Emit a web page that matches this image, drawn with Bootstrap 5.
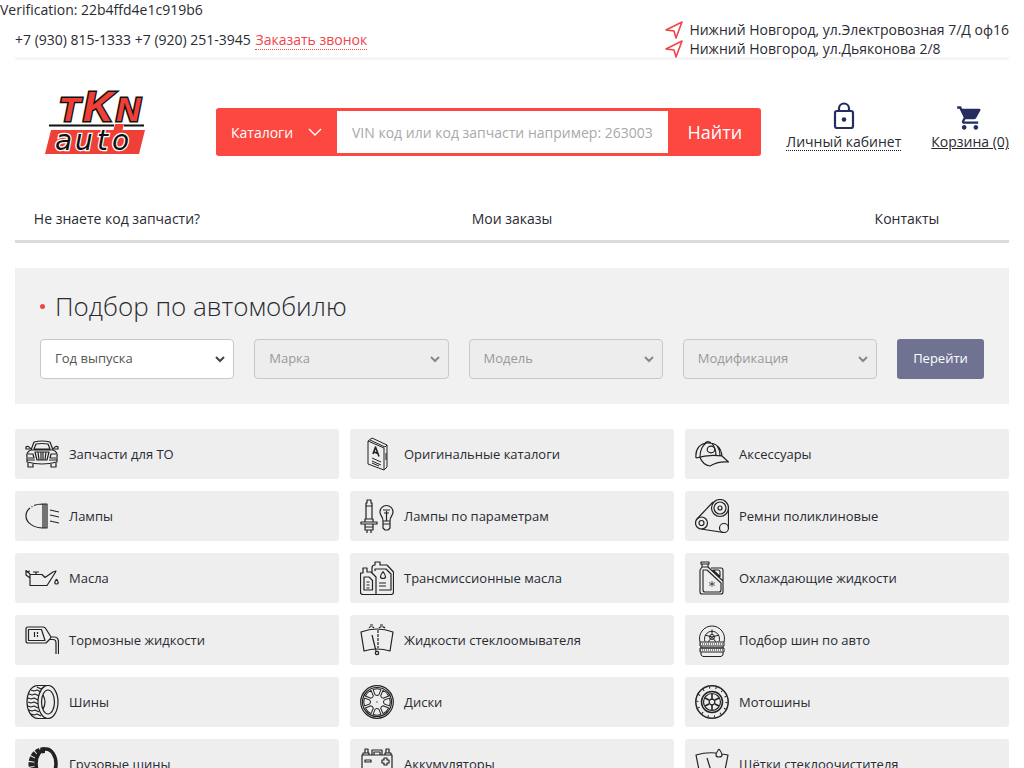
<!DOCTYPE html>
<html lang="ru">
<head>
<meta charset="utf-8">
<meta name="viewport" content="width=device-width, initial-scale=1">
<title>TKN auto</title>
<link href="https://cdn.jsdelivr.net/npm/bootstrap@5.3.0/dist/css/bootstrap.min.css" rel="stylesheet">
<style>
body{font-family:"Open Sans",sans-serif;font-size:14px;line-height:19px;color:#2a2a32}
a{color:inherit;text-decoration:none}
.page{padding:0 15px}
.topbar{border-bottom:3px solid #f5f5f5;height:41px;padding-top:2px}
.callback{color:#f0444a;border-bottom:1px dotted #f0444a;margin-left:1px}
.place{padding-left:6px}
.masthead{padding-top:20px;gap:25px}
.brand{padding-left:29px;width:176px}
.search{border-radius:3px;background:#fd4841;height:48px}
.search button{background:none;border:0;color:#fff}
.catalogs{width:121px;font-weight:500;padding:0 15px}
.search input{border:0;border-radius:0;margin:3px 0;padding:0 15px;font-size:14px;color:#333;min-width:0}
.search input::placeholder{color:#a9a9a9;opacity:1}
.find{width:93px;font-size:18px;font-weight:500}
.userlink{margin-bottom:5px}
.basket{margin-left:5px}
.account{border-bottom:1px dotted #1b1b24;line-height:16px;margin-top:4px}
.cart{text-decoration:underline}
.mainnav{border-bottom:3px solid #dcdcdc;margin-top:43px;padding:10px 0 12px}
.mainnav a{width:204px;text-align:center}
.picker{background:#f1f1f1;margin-top:25px;padding:18px 25px 25px}
.picker h1{font-size:26px;line-height:40px;font-weight:300;margin-bottom:13px}
.picker form{gap:20px}
.dot{width:5px;height:5px;border-radius:50%;background:#f0444a;margin-right:10px}
.picker .form-select{height:40px;font-size:13px;color:#555;border-color:#c8c8c8;border-radius:4px;padding:0 30px 0 14px;background-position:right 7px center;background-size:12px 12px;background-image:url("data:image/svg+xml,%3Csvg xmlns='http://www.w3.org/2000/svg' viewBox='0 0 12 12'%3E%3Cpath d='M2 4l4 4 4-4' fill='none' stroke='%23444' stroke-width='2'/%3E%3C/svg%3E")}
.picker .form-select:disabled{background-color:#ededed;color:#999;opacity:1;background-image:url("data:image/svg+xml,%3Csvg xmlns='http://www.w3.org/2000/svg' viewBox='0 0 12 12'%3E%3Cpath d='M2 4l4 4 4-4' fill='none' stroke='%23888' stroke-width='2'/%3E%3C/svg%3E")}
.go{background:#6f7291;color:#fff;border-radius:3px;font-size:13px;width:87px;height:40px;padding:0}
.go:hover{background:#5c5f7e;color:#fff}
.tiles{margin-top:25px;gap:12px 11px;grid-template-columns:repeat(3,1fr)}
.tile{background:#eee;border-radius:3px;height:50px;padding:0 10px;gap:10px;font-size:13px}
.tile svg{width:34px;height:34px;flex:none;fill:none;stroke:#222;stroke-width:1.2;stroke-linejoin:round}
</style>
</head>
<body>
<div>Verification: 22b4ffd4e1c919b6</div>
<div class="page">
<div class="topbar d-flex justify-content-between align-items-center">
  <div>+7 (930) 815-1333 +7 (920) 251-3945 <a href="#" class="callback">Заказать звонок</a></div>
  <address class="m-0">
    <div class="d-flex align-items-center"><svg width="18" height="18" fill="none" stroke="#f0444a" stroke-width="1.6" stroke-linejoin="round"><path d="M1 9 17 1 11 17 9 10Z"/></svg><span class="place">Нижний Новгород, ул.Электровозная 7/Д оф16</span></div>
    <div class="d-flex align-items-center"><svg width="18" height="18" fill="none" stroke="#f0444a" stroke-width="1.6" stroke-linejoin="round"><path d="M1 9 17 1 11 17 9 10Z"/></svg><span class="place">Нижний Новгород, ул.Дьяконова 2/8</span></div>
  </address>
</div>
<header class="masthead d-flex align-items-end">
  <a href="#" class="brand flex-shrink-0" aria-label="TKN auto">
    <svg class="d-block" width="104" height="76" viewBox="0 -8 104 76">
      <path d="M7 42H101L95 66H1Z" fill="#ee4037"/>
      <path d="M71 36H80L77 48H68Z" fill="#ee4037"/>
      <path d="M5 37.500H70M80 37.500H100" stroke="#111" stroke-width="1.8"/>
      <g font-family="Liberation Sans" font-weight="700" font-style="italic" fill="#ee4037" stroke="#111" stroke-width="3" paint-order="stroke">
      <text x="15" y="33" font-size="34">T</text><text x="39" y="33" font-size="42">K</text><text x="72" y="33" font-size="34">N</text></g>
      <g font-family="DejaVu Sans" font-style="italic" font-size="28" fill="#111" stroke="#fff" stroke-width="2.500" paint-order="stroke">
      <text x="11" y="62">a</text><text x="31" y="62">u</text><text x="53" y="62">t</text><text x="68" y="62">o</text></g>
    </svg>
  </a>
  <form class="search d-flex flex-grow-1" onsubmit="return false">
    <button type="button" class="catalogs d-flex align-items-center justify-content-between flex-shrink-0">Каталоги<svg width="14" height="8" fill="none" stroke="#fff" stroke-width="1.4"><path d="M1 1 7 7 13 1"/></svg></button>
    <input class="flex-grow-1" type="text" aria-label="Поиск" placeholder="VIN код или код запчасти например: 263003">
    <button class="find flex-shrink-0">Найти</button>
  </form>
  <a href="#" class="userlink d-flex flex-column align-items-center"><svg width="22" height="28" fill="none" stroke="#242c60" stroke-width="2.2"><rect x="2" y="9" width="18" height="17" rx="2"/><path d="M6 9V6.500a5 5 0 0 1 10 0V9"/><circle cx="11" cy="17.500" r="2.300" fill="#242c60" stroke="none"/></svg><span class="account">Личный кабинет</span></a>
  <a href="#" class="userlink basket d-flex flex-column align-items-center"><svg width="28" height="28" viewBox="0 0 24 24" fill="#242c60"><path d="M7 18c-1.100 0-1.990.9-1.990 2S5.900 22 7 22s2-.9 2-2-.9-2-2-2zM1 2v2h2l3.600 7.590-1.350 2.450C4.520 15.370 5.480 17 7 17h12v-2H7.420c-.14 0-.25-.11-.25-.25l.03-.12.9-1.630h7.450c.75 0 1.410-.41 1.750-1.030l3.580-6.490A1 1 0 0 0 20 4H5.210l-.94-2H1zm16 16c-1.100 0-1.990.9-1.990 2s.89 2 1.990 2 2-.9 2-2-.9-2-2-2z"/></svg><span class="cart">Корзина (0)</span></a>
</header>
<nav class="mainnav d-flex justify-content-between"><a href="#">Не знаете код запчасти?</a><a href="#">Мои заказы</a><a href="#">Контакты</a></nav>
<section class="picker">
  <h1 class="d-flex align-items-center"><span class="dot"></span>Подбор по автомобилю</h1>
  <form class="d-flex" onsubmit="return false">
    <select class="form-select" aria-label="Год выпуска"><option>Год выпуска</option></select>
    <select class="form-select" aria-label="Марка" disabled><option>Марка</option></select>
    <select class="form-select" aria-label="Модель" disabled><option>Модель</option></select>
    <select class="form-select" aria-label="Модификация" disabled><option>Модификация</option></select>
    <button class="btn go flex-shrink-0">Перейти</button>
  </form>
</section>
<main class="tiles d-grid">
<a href="#" class="tile d-flex align-items-center"><svg viewBox="0 0 34 34"><path d="M6 13 9 5Q17 3 25 5L28 13M9 12l2-5q6-1 12 0l2 5ZM6 13Q1 15 2 20V25Q17 29 32 25V20Q33 15 28 13ZM5 12H1V10q2-2 5 2M29 12h4v-2q-2-2-5 2M3 26v4h5v-3M31 26v4h-5v-3M10 15H24L22 23H12ZM13 15l1 8M16 15v8M18 15v8M21 15l-1 8M3 17h5l1 4H3M31 17h-5l-1 4h6M2 23h8M24 23h8"/></svg>Запчасти для ТО</a>
<a href="#" class="tile d-flex align-items-center"><svg viewBox="0 0 34 34"><path stroke-width="1" d="M8 4 12 1 27 8V30L24 33 8 27ZM8 4 24 11V33M10 3l15 7 2-2M12 21l9 4M12 24l9 4M12 26l7 3M26 16v7"/><path stroke-width="1.600" d="m13 17 2.500-7 3.500 9.500M14 15l4 1.500"/></svg>Оригинальные каталоги</a>
<a href="#" class="tile d-flex align-items-center"><svg viewBox="0 0 34 34"><path d="M1 21C0 12 5 6 13 6C21 6 26 10 27 19M1 21Q14 17 27 19L33.500 25Q23 24 15 29 8 28 5 20.500M10 6q3-3 6 0M11 6C7 9 5 14 5 20M17 6.500q4 5 4 12M22 9q3 4 3 10"/><ellipse cx="16" cy="12.500" rx="3.800" ry="3.300"/></svg>Аксессуары</a>
<a href="#" class="tile d-flex align-items-center"><svg viewBox="0 0 34 34"><path d="M5 9Q1 12 1 17C1 24 9 29 18 29H22V5H18Q12 5 9 6.500M6.500 8l1-.5M18 5V29M20 5V29M25 11l9 2M25 16l9 2M25 22l9 2"/></svg>Лампы</a>
<a href="#" class="tile d-flex align-items-center"><svg viewBox="0 0 34 34"><path d="M6 20V4H7V1H11V4H12V20ZM6 7h6M5 20h8v3H5ZM1 23H17V25H1ZM5 25H13V31H5ZM5 28H13M7 31v3M11 31v3M23 22C23 17 20 17 20 13a6.500 6.500 0 0 1 13 0C33 17 30 17 30 22V29l-2 2H25l-2-2ZM23 22h7M23 25h7M26.500 22V12M23 11h7M24 14h5"/></svg>Лампы по параметрам</a>
<a href="#" class="tile d-flex align-items-center"><svg viewBox="0 0 34 34"><circle cx="25" cy="9" r="8.500"/><circle cx="25" cy="9" r="6"/><circle cx="25" cy="9" r="2"/><circle cx="6.500" cy="24" r="6"/><circle cx="6.500" cy="24" r="2.500"/><circle cx="29" cy="29" r="4.500"/><path d="M2 20 18 3M33.500 9V29M6 30 29 33.500"/></svg>Ремни поликлиновые</a>
<a href="#" class="tile d-flex align-items-center"><svg viewBox="0 0 34 34"><path stroke-width="1.200" d="M5 13.500H17L20 16.500 28 11 31 10 30 12 22 24.500H5ZM5 17 1 14V9.500l4 3.500M11 13v-2M8 11h6M31.500 18q-3.500 5 0 5t0-5M1 11l4-1"/></svg>Масла</a>
<a href="#" class="tile d-flex align-items-center"><svg viewBox="0 0 34 34"><path d="M12 12V7Q12 4 15 4V1H20V4H27L33.500 11V31Q33.500 33.500 31 33.500H3Q.5 33.500 .5 31V12H3V7H7V11H11L16 16V33M4 29V16H9L12.500 19.500V29ZM15 10V8H26L31 13V29H19M6.500 21h3M6.500 24h3M6.500 27h3M19 22h7M19 25h7"/><path d="M23 10.500q-5 7 0 7t0-7"/></svg>Трансмиссионные масла</a>
<a href="#" class="tile d-flex align-items-center"><svg viewBox="0 0 34 34"><path stroke-width="1.100" d="M6 1h8v2H6ZM7 3h6v3H7ZM7 6 5 9V31q0 2 2 2H26q2 0 2-2V9q0-2-2-2H16M13 6 28 20M8 9h4L26 22v7q0 2-2 2H10q-2 0-2-2ZM18 9h5q2 0 2 2v4.500Z"/><path stroke-width=".7" d="M17 20v6M14 21.500l6 3M20 21.500l-6 3"/></svg>Охлаждающие жидкости</a>
<a href="#" class="tile d-flex align-items-center"><svg viewBox="0 0 34 34"><path d="M3 4H18Q20 4 21 6L26 14L25 16L21 20H3Q1 20 1 18V6Q1 4 3 4ZM3.500 6.500H16.500L20 17.500H3.500ZM26 14H29Q33.500 14 33.500 19V31M31 31V20Q31 16.500 28 16.500H25M9.500 9v5M12.500 9v2M12.500 12v2"/></svg>Тормозные жидкости</a>
<a href="#" class="tile d-flex align-items-center"><svg viewBox="0 0 34 34"><path d="M1 9Q17 3 33 9L30 28Q17 24 4 28ZM12 12l4 16"/><circle cx="17" cy="30" r="1.700"/><path stroke-dasharray="3 1" d="M18 7V25M10 2h4M20 2h4M9 5q2-3 5 0M19 5q3-3 6 0"/></svg>Жидкости стеклоомывателя</a>
<a href="#" class="tile d-flex align-items-center"><svg viewBox="0 0 34 34"><g stroke-width="1"><path d="M5 19A12.500 12.500 0 1 1 29 19M10 18.500a7.500 7.500 0 1 1 14 0M5 19H29V23H5ZM6 23V25H28V23M5 25H29V29H5ZM6 29V32L8 33.500H26L28 32V29M17 6.500v5M17 14l-7-2M17 14l7-2M17 14l-4 5M17 14l4 5"/><path d="M5 21h24M5 27h24" stroke-dasharray="1 1"/><circle cx="17" cy="14" r="2.500"/></g></svg>Подбор шин по авто</a>
<a href="#" class="tile d-flex align-items-center"><svg viewBox="0 0 34 34"><ellipse cx="23" cy="17" rx="10" ry="16.500"/><ellipse cx="23" cy="17" rx="6.500" ry="12"/><path d="M23 .5H13C5 1 2 9 2 17s4 16 11 16.500H23M18 10q4 7 0 14M6 5l3 1 3-1 4 2M4 9l3 1 3-1 4 2M3 13l3 1 3-1 4 2M3 17l3 1 3-1 4 2M3 21l3 1 3-1 4 2M4 25l3 1 3-1 4 2M6 29l3 1 3-1 4 2M12 2l4 2 3-2"/></svg>Шины</a>
<a href="#" class="tile d-flex align-items-center"><svg viewBox="0 0 34 34"><circle cx="17" cy="17" r="16.300"/><circle cx="17" cy="17" r="14.500"/><g id="spokes" stroke-width="1"><path id="window" d="M13 4.500Q17 3 21 4.500L18.800 10Q17 11 15.200 10Z"/><use href="#window" transform="rotate(45 17 17)"/><use href="#window" transform="rotate(90 17 17)"/><use href="#window" transform="rotate(135 17 17)"/></g><use href="#spokes" transform="rotate(180 17 17)"/><circle cx="17" cy="17" r=".5" stroke-width=".5"/></svg>Диски</a>
<a href="#" class="tile d-flex align-items-center"><svg viewBox="0 0 34 34"><circle cx="17" cy="17" r="16.200" stroke-width="1.500"/><circle cx="17" cy="17" r="14.500" stroke-dasharray="1 5.500" stroke-width="2"/><circle cx="17" cy="17" r="10.500" stroke-width="1.500"/><circle cx="17" cy="17" r="8.500"/><circle cx="17" cy="17" r="2.800"/><path stroke-width="1.600" d="M17 9v5M17 20v5M10 13l4 2M20 19l4 2M10 21l4-2M20 15l4-2"/></svg>Мотошины</a>
<a href="#" class="tile d-flex align-items-center"><svg viewBox="0 0 34 34"><ellipse cx="21" cy="17" rx="10" ry="15" stroke-width="3.500"/><path stroke-width="6" stroke-dasharray="4 1" d="M20 3C2 3 2 31 20 31"/></svg>Грузовые шины</a>
<a href="#" class="tile d-flex align-items-center"><svg viewBox="0 0 34 34"><path d="M2 8H32V32H2ZM3 8V6H9V8M5 6V2h3v4M25 8V6h6v2M26 6V2h3v4M12 8V3H22V8M14 8V5h6v3M5 13h6v2H5ZM22 13h2v-2h3v2h2v3h-2v2h-3v-2h-2Z"/></svg>Аккумуляторы</a>
<a href="#" class="tile d-flex align-items-center"><svg viewBox="0 0 34 34"><path d="M21 6Q11 5 1 8L5 28Q17 23 29 28L33 8 27 7M12 11l5 16M24 2q-6 8 0 8t0-8"/></svg>Щётки стеклоочистителя</a>
</main>
</div>
<script src="https://cdn.jsdelivr.net/npm/bootstrap@5.3.0/dist/js/bootstrap.bundle.min.js"></script>
</body>
</html>
